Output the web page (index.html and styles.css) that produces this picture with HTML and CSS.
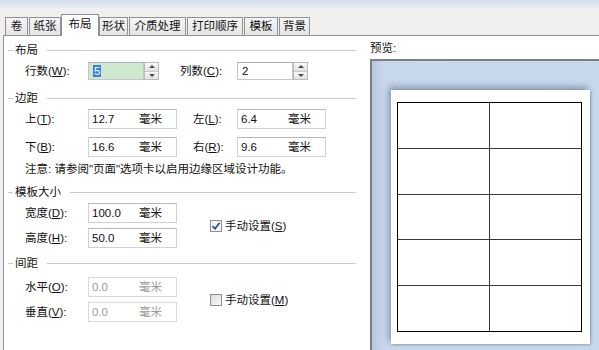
FILE: index.html
```html
<!DOCTYPE html>
<html lang="zh-CN">
<head>
<meta charset="utf-8">
<title>布局</title>
<link rel="stylesheet" href="styles.css">
</head>
<body>
<div class="topbar"></div>
<div class="tabs">
  <div class="tab w23">卷</div>
  <div class="tab w32">纸张</div>
  <div class="tab sel">布局</div>
  <div class="tab w29">形状</div>
  <div class="tab w57">介质处理</div>
  <div class="tab w56">打印顺序</div>
  <div class="tab w33">模板</div>
  <div class="tab w31">背景</div>
</div>
<div class="panel">
  <div class="left">
    <div class="hdr"><span class="hl-s"></span><span class="ht">布局</span><span class="hl"></span></div>
    <div class="row r-first">
      <span class="lbl">行数(<u>W</u>):</span>
      <span class="num green"><span class="selv">5</span></span>
      <span class="spin"><span class="sb"><i class="up"></i></span><span class="sb"><i class="dn"></i></span></span>
      <span class="lbl lbl2a">列数(<u>C</u>):</span>
      <span class="num">2</span>
      <span class="spin"><span class="sb"><i class="up"></i></span><span class="sb"><i class="dn"></i></span></span>
    </div>

    <div class="hdr h2"><span class="hl-s"></span><span class="ht">边距</span><span class="hl"></span></div>
    <div class="row r-m1">
      <span class="lbl">上(<u>T</u>):</span>
      <span class="inp"><span class="v">12.7</span><span class="u">毫米</span></span>
      <span class="lbl lbl2">左(<u>L</u>):</span>
      <span class="inp"><span class="v">6.4</span><span class="u">毫米</span></span>
    </div>
    <div class="row r-m2">
      <span class="lbl">下(<u>B</u>):</span>
      <span class="inp"><span class="v">16.6</span><span class="u">毫米</span></span>
      <span class="lbl lbl2">右(<u>R</u>):</span>
      <span class="inp"><span class="v">9.6</span><span class="u">毫米</span></span>
    </div>
    <div class="note">注意: 请参阅"页面"选项卡以启用边缘区域设计功能。</div>

    <div class="hdr h3"><span class="hl-s"></span><span class="ht">模板大小</span><span class="hl"></span></div>
    <div class="grp g1">
      <div class="col">
        <div class="row">
          <span class="lbl">宽度(<u>D</u>):</span>
          <span class="inp"><span class="v">100.0</span><span class="u">毫米</span></span>
        </div>
        <div class="row r-gap">
          <span class="lbl">高度(<u>H</u>):</span>
          <span class="inp"><span class="v">50.0</span><span class="u">毫米</span></span>
        </div>
      </div>
      <div class="chk"><span class="box on"><svg width="10" height="10" viewBox="0 0 10 10"><path d="M1.5 5.2 L4 7.8 L8.6 1.8" fill="none" stroke="#2a4d8f" stroke-width="1.7"/></svg></span><span>手动设置(<u>S</u>)</span></div>
    </div>

    <div class="hdr h4"><span class="hl-s"></span><span class="ht">间距</span><span class="hl"></span></div>
    <div class="grp g2">
      <div class="col">
        <div class="row">
          <span class="lbl">水平(<u>O</u>):</span>
          <span class="inp dis"><span class="v">0.0</span><span class="u">毫米</span></span>
        </div>
        <div class="row r-gap">
          <span class="lbl">垂直(<u>V</u>):</span>
          <span class="inp dis"><span class="v">0.0</span><span class="u">毫米</span></span>
        </div>
      </div>
      <div class="chk"><span class="box"></span><span>手动设置(<u>M</u>)</span></div>
    </div>
  </div>
  <div class="right">
    <div class="plbl">预览:</div>
    <div class="pbox">
      <div class="page">
        <div class="labels">
          <div class="cell"></div><div class="cell"></div>
          <div class="cell"></div><div class="cell"></div>
          <div class="cell"></div><div class="cell"></div>
          <div class="cell"></div><div class="cell"></div>
          <div class="cell"></div><div class="cell"></div>
        </div>
      </div>
    </div>
  </div>
</div>
</body>
</html>
```
FILE: styles.css
```css
html, body {
  margin: 0;
  padding: 0;
}
body {
  width: 599px;
  height: 350px;
  overflow: hidden;
  background: #f0f0f0;
  font-family: "Liberation Sans", "Noto Sans CJK SC", sans-serif;
  font-size: 11.5px;
  color: #111;
  line-height: 14px;
}
u { text-decoration: underline; text-underline-offset: 1px; }

.topbar {
  height: 8px;
  background: linear-gradient(#d3dde9, #e9eef4);
}

.tabs {
  height: 27px;
  display: flex;
  align-items: flex-end;
  padding-left: 5px;
}
.tab {
  box-sizing: border-box;
  height: 18px;
  border: 1px solid #8e9197;
  border-bottom: none;
  background: linear-gradient(#f6f6f6, #e4e4e4);
  text-align: center;
  line-height: 16px;
  margin-right: 1px;
}
.w23 { width: 23px; }
.w32 { width: 32px; }
.w29 { width: 29px; }
.w57 { width: 57px; }
.w56 { width: 56px; }
.w33 { width: 34px; }
.w31 { width: 31px; }
.tab.sel {
  width: 38px;
  height: 22px;
  margin-bottom: -1px;
  margin-left: -1px;
  margin-right: 0;
  background: #fff;
  position: relative;
  z-index: 1;
  line-height: 18px;
}

.panel {
  display: flex;
  margin-left: 3px;
  height: 320px;
  border-top: 1px solid #8e9197;
  border-left: 1px solid #8e9197;
  background: #fff;
}

.left {
  width: 366px;
  flex: none;
  padding-top: 7px;
}

.hdr {
  display: flex;
  align-items: center;
  height: 14px;
  padding-left: 4px;
  width: 348px;
}
.hl-s {
  width: 5px;
  height: 1px;
  background: #c9c9c9;
  margin-right: 2px;
}
.hl {
  flex: 1;
  height: 1px;
  background: #c9c9c9;
  margin-left: 9px;
}
.h2 { margin-top: 11px; }
.h3 { margin-top: 9px; }
.h4 { margin-top: 8px; }

.row {
  display: flex;
  align-items: center;
  height: 20px;
  padding-left: 21px;
}
.r-first { margin-top: 5px; height: 18px; }
.r-m1 { margin-top: 4px; }
.r-m2 { margin-top: 8px; }
.r-gap { margin-top: 5px; }

.lbl {
  width: 63px;
  flex: none;
}
.lbl2 { margin-left: 16px; width: 44px; }
.lbl2a { margin-left: 21px; width: 57px; }

.num {
  box-sizing: border-box;
  width: 56px;
  height: 18px;
  border: 1px solid #c3c5cb;
  border-top-color: #aeb1b8;
  padding-left: 4px;
  line-height: 16px;
}
.num.green { background: #cde8cd; }
.selv {
  background: #3a7ee0;
  color: #fff;
  padding: 0 1px;
}

.spin {
  box-sizing: border-box;
  width: 15px;
  height: 18px;
  display: flex;
  flex-direction: column;
  border: 1px solid #b9bbc0;
}
.sb {
  flex: 1;
  display: flex;
  align-items: center;
  justify-content: center;
  background: linear-gradient(#f8f8f8, #e2e2e2);
}
.sb + .sb { border-top: 1px solid #c8c8c8; }
.up, .dn {
  width: 0;
  height: 0;
  border-left: 3px solid transparent;
  border-right: 3px solid transparent;
}
.up { border-bottom: 3px solid #4a4a4a; }
.dn { border-top: 3px solid #4a4a4a; }

.inp {
  box-sizing: border-box;
  display: flex;
  align-items: center;
  width: 89px;
  height: 20px;
  border: 1px solid #cfd1d6;
  border-top-color: #b4b7bd;
  padding-left: 3px;
}
.inp .v { width: 47px; }
.inp.dis { color: #9a9a9a; border-color: #d9d9d9; }

.note {
  margin-top: 5px;
  padding-left: 21px;
  height: 14px;
}

.grp {
  display: flex;
  align-items: center;
}
.g1 { margin-top: 4px; }
.g2 { margin-top: 7px; }
.col { display: flex; flex-direction: column; }

.chk {
  display: flex;
  align-items: center;
  margin-left: 33px;
}
.box {
  box-sizing: border-box;
  width: 12px;
  height: 12px;
  border: 1px solid #8f8f8f;
  background: linear-gradient(135deg, #dcdcdc, #f8f8f8);
  margin-right: 3px;
  display: flex;
  align-items: center;
  justify-content: center;
}
.box.on { background: #f4f4f4; }

.right {
  flex: 1;
  padding-top: 5px;
  padding-left: 0;
  overflow: hidden;
}
.plbl { height: 14px; }
.pbox {
  margin-top: 4px;
  height: 300px;
  border-top: 2px solid #7d7f83;
  border-left: 2px solid #7d7f83;
  background: linear-gradient(90deg, #b6c9e2 0, #c8d8ec 12px, #c9d9ed 100%);
  padding-left: 19px;
  padding-top: 29px;
}
.page {
  box-sizing: border-box;
  width: 199px;
  height: 254px;
  background: #fff;
  box-shadow: -2px -3px 7px rgba(70, 90, 120, 0.55), 1px 1px 2px rgba(70, 90, 120, 0.35);
  padding-left: 6px;
  padding-top: 12px;
}
.labels {
  box-sizing: border-box;
  width: 185px;
  height: 230px;
  display: grid;
  grid-template-columns: 1fr 1fr;
  grid-template-rows: repeat(5, 1fr);
  gap: 1px;
  background: #3a3a3a;
  border: 1px solid #000;
}
.cell { background: #fff; }
```
